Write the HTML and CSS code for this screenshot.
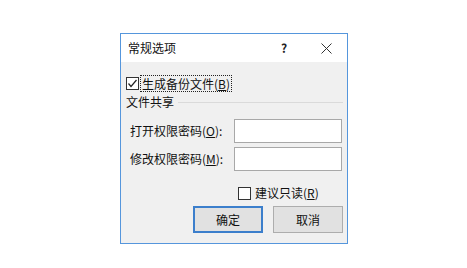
FILE: index.html
```html
<!DOCTYPE html>
<html lang="zh-CN">
<head>
<meta charset="utf-8">
<title>常规选项</title>
<link rel="stylesheet" href="styles.css">
</head>
<body>
<div class="dialog">
  <div class="titlebar">
    <span class="title">常规选项</span>
    <span class="tb-btn help">?</span>
    <span class="tb-btn close"><svg width="11" height="11" viewBox="0 0 11 11"><path d="M0.5 0.5 L10.5 10.5 M10.5 0.5 L0.5 10.5" stroke="#333" stroke-width="1" fill="none"/></svg></span>
  </div>
  <div class="content">
    <div class="check-row">
      <span class="box"><svg width="11" height="11" viewBox="0 0 11 11"><path d="M1.5 5.5 L4 8.5 L9.5 2" stroke="#222" stroke-width="1.2" fill="none"/></svg></span>
      <span class="focus">生成备份文件(<u>B</u>)</span>
    </div>
    <div class="group"><span>文件共享</span><span class="rule"></span></div>
    <div class="field"><span class="lbl">打开权限密码(<u>O</u>):</span><span class="input"></span></div>
    <div class="field next"><span class="lbl">修改权限密码(<u>M</u>):</span><span class="input"></span></div>
    <div class="readonly"><span class="box"></span><span class="ro-text">建议只读(<u>R</u>)</span></div>
    <div class="buttons">
      <span class="btn default">确定</span>
      <span class="btn">取消</span>
    </div>
  </div>
</div>
</body>
</html>
```

FILE: styles.css
```css
html, body {
  margin: 0;
  padding: 0;
  background: #ffffff;
}
body {
  font-family: "Noto Sans CJK SC", "Microsoft YaHei", sans-serif;
  font-size: 12px;
  color: #111;
  padding-top: 33px;
  padding-left: 120px;
}
.dialog {
  width: 228px;
  height: 211px;
  box-sizing: border-box;
  border: 1px solid #5596dc;
  background: #f0f0f0;
  display: flex;
  flex-direction: column;
}
.titlebar {
  height: 28px;
  background: #ffffff;
  display: flex;
  align-items: center;
}
.title {
  flex: 1;
  padding-left: 7px;
  line-height: 16px;
}
.tb-btn {
  width: 42px;
  height: 28px;
  display: flex;
  align-items: center;
  justify-content: center;
  line-height: 16px;
  color: #222;
}
.help {
  font-size: 12px;
  font-weight: bold;
}
.content {
  padding: 13px 4px 0 5px;
  display: flex;
  flex-direction: column;
}
.check-row {
  display: flex;
  align-items: center;
  height: 17px;
}
.box {
  width: 13px;
  height: 13px;
  box-sizing: border-box;
  border: 1px solid #333;
  background: #fff;
  display: flex;
  align-items: center;
  justify-content: center;
}
.focus {
  border: 1px dotted #222;
  padding: 0 1px;
  line-height: 15px;
  margin-left: 1px;
}
.group {
  display: flex;
  align-items: center;
  height: 16px;
  line-height: 16px;
  margin-top: 2px;
}
.rule {
  flex: 1;
  height: 1px;
  background: #dadada;
  margin-left: 4px;
}
.field {
  display: flex;
  align-items: center;
  margin-top: 9px;
  padding-left: 4px;
}
.field.next {
  margin-top: 4px;
}
.lbl {
  width: 104px;
  line-height: 16px;
}
.input {
  width: 108px;
  height: 24px;
  box-sizing: border-box;
  border: 1px solid #a8a8a8;
  background: #fff;
}
.readonly {
  display: flex;
  align-items: center;
  height: 14px;
  margin-top: 15px;
  padding-left: 112px;
}
.ro-text {
  margin-left: 4px;
  line-height: 14px;
}
.buttons {
  display: flex;
  justify-content: flex-end;
  gap: 10px;
  margin-top: 6px;
}
.btn {
  width: 70px;
  height: 27px;
  box-sizing: border-box;
  border: 1px solid #adadad;
  background: #e1e1e1;
  display: flex;
  align-items: center;
  justify-content: center;
  line-height: 16px;
}
.btn.default {
  border: 2px solid #3c7fcc;
}
```
